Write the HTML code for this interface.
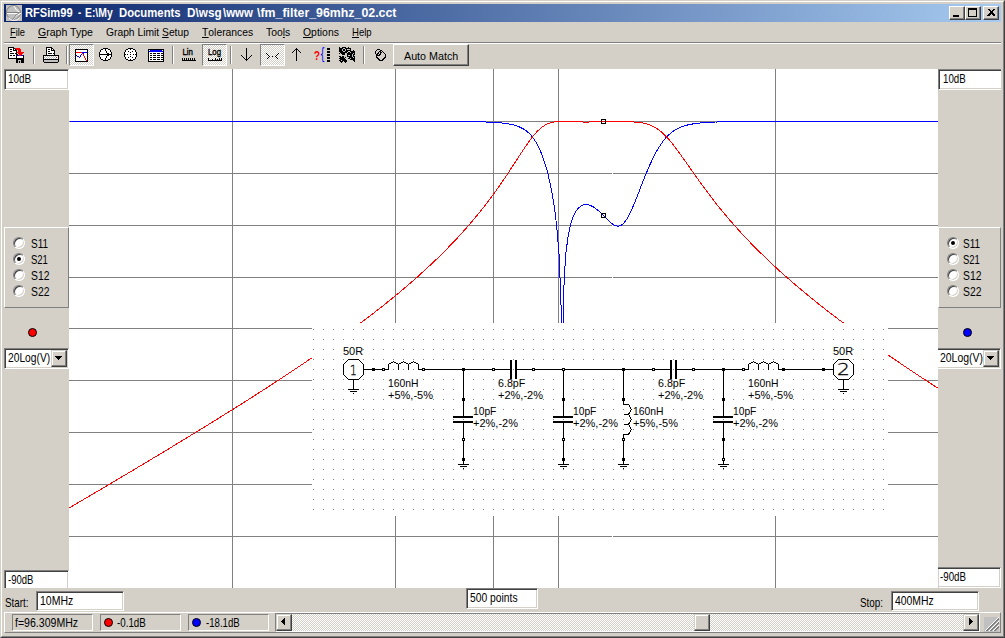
<!DOCTYPE html>
<html><head><meta charset="utf-8"><title>RFSim99</title>
<style>
*{margin:0;padding:0;box-sizing:border-box}
html,body{width:1005px;height:638px;overflow:hidden;background:#d4d0c8}
body{position:relative;font-family:"Liberation Sans",sans-serif;font-size:11px;color:#000;-webkit-font-smoothing:none}
.a{position:absolute}
.t{position:absolute;white-space:nowrap;line-height:13px;height:13px}
.t{transform-origin:0 10px}
.sunk{position:absolute;background:#fff;border:1px solid;border-color:#808080 #fff #fff #808080;box-shadow:inset 1px 1px 0 #404040, inset -1px -1px 0 #d4d0c8}
.stat{position:absolute;border:1px solid;border-color:#808080 #fff #fff #808080}
.btn{position:absolute;background:#d4d0c8;border:1px solid;border-color:#fff #404040 #404040 #fff;box-shadow:inset -1px -1px 0 #808080, inset 1px 1px 0 #d4d0c8}
.sbtn{position:absolute;background:#d4d0c8;border:1px solid;border-color:#d4d0c8 #404040 #404040 #d4d0c8;box-shadow:inset -1px -1px 0 #808080, inset 1px 1px 0 #fff}
.chk{background-color:#fff;background-image:linear-gradient(45deg,#d4d0c8 25%,transparent 25%,transparent 75%,#d4d0c8 75%),linear-gradient(45deg,#d4d0c8 25%,transparent 25%,transparent 75%,#d4d0c8 75%);background-size:2px 2px;background-position:0 0,1px 1px}
.tbp{position:absolute;border:1px solid;border-color:#808080 #fff #fff #808080}
.sep{position:absolute;width:2px;height:18px;top:46px;border-left:1px solid #808080;border-right:1px solid #fff}
u{text-decoration:none;border-bottom:1px solid #000;display:inline-block;line-height:11px;height:11px;vertical-align:top;margin-top:1px}
.radio{position:absolute;width:12px;height:12px;border-radius:50%;background:#fff;border:1px solid;border-color:#808080 #fff #fff #808080;box-shadow:inset 1px 1px 0 #404040, inset -1px -1px 0 #d4d0c8}
svg{position:absolute;left:0;top:0}
svg.a{left:auto;top:auto}
</style></head><body>

<div class="a" style="left:0;top:0;width:1005px;height:638px;border:1px solid;border-color:#d4d0c8 #404040 #404040 #d4d0c8"></div>
<div class="a" style="left:1px;top:1px;width:1003px;height:636px;border:1px solid;border-color:#fff #808080 #808080 #fff"></div>
<div class="a" style="left:4px;top:4px;width:997px;height:18px;background:linear-gradient(90deg,#0a246a,#a6caf0)"></div>
<div class="a" id="title" style="left:0;top:0;color:#fff;font-weight:bold;font-size:12px">
<span class="t" id="t0" style="left:25.25px;top:7px;transform:scale(0.9277,1);">RFSim99 </span>
<span class="t" id="t1" style="left:77.62px;top:7px;transform:scale(0.7815,1);">- </span>
<span class="t" id="t2" style="left:85.23px;top:7px;transform:scale(0.8638,1);">E:\My </span>
<span class="t" id="t3" style="left:119.47px;top:7px;transform:scale(0.9426,1);">Documents </span>
<span class="t" id="t4" style="left:187.25px;top:7px;transform:scale(0.979,1);">D\wsg</span>
<span class="t" id="t5" style="left:223.27px;top:7px;transform:scale(0.9555,1);">\www</span>
<span class="t" id="t6" style="left:256.68px;top:7px;transform:scale(1.0299,1);">\fm_filter_96mhz_02.cct</span>
</div>
<div class="btn" style="left:949px;top:6px;width:16px;height:14px"></div>
<div class="btn" style="left:965px;top:6px;width:16px;height:14px"></div>
<div class="btn" style="left:983px;top:6px;width:16px;height:14px"></div>
<div class="t" id="m0" style="left:10.07px;top:26px;transform:scale(0.8459,1);"><u>F</u>ile</div>
<div class="t" id="m1" style="left:38.3px;top:26px;transform:scale(0.9581,1);"><u>G</u>raph Type</div>
<div class="t" id="m2" style="left:105.5px;top:26px;transform:scale(0.9348,1);">Graph Limit <u>S</u>etup</div>
<div class="t" id="m3" style="left:201.5px;top:26px;transform:scale(0.9409,1);"><u>T</u>olerances</div>
<div class="t" id="m4" style="left:265.71px;top:26px;transform:scale(0.9394,1);">Too<u>l</u>s</div>
<div class="t" id="m5" style="left:302.9px;top:26px;transform:scale(0.9474,1);"><u>O</u>ptions</div>
<div class="t" id="m6" style="left:352.1px;top:26px;transform:scale(0.8696,1);"><u>H</u>elp</div>
<div class="a" style="left:4px;top:42px;width:997px;height:1px;background:#808080"></div>
<div class="a" style="left:4px;top:43px;width:997px;height:1px;background:#fff"></div>
<div class="sep" style="left:33px"></div>
<div class="sep" style="left:66px"></div>
<div class="sep" style="left:172px"></div>
<div class="sep" style="left:230px"></div>
<div class="sep" style="left:363px"></div>
<div class="tbp chk" style="left:69px;top:44px;width:25px;height:22px"></div>
<div class="tbp chk" style="left:202px;top:44px;width:25px;height:22px"></div>
<div class="tbp chk" style="left:260px;top:44px;width:25px;height:22px"></div>
<div class="btn" style="left:393px;top:44px;width:76px;height:22px"></div>
<div class="t" id="am" style="left:404.3px;top:50px;transform:scale(0.9749,1);">Auto Match</div>
<div class="a" style="left:69px;top:69px;width:869px;height:519px;background:#fff"></div>
<div class="a" style="left:4px;top:69px;width:65px;height:519px;overflow:hidden">
<div class="sunk" style="left:0;top:0;width:65px;height:21px"></div>
<div class="sunk" style="left:0;top:501px;width:65px;height:21px"></div>
</div>
<div class="t ms" id="e1" style="left:8.11px;top:73px;transform:scale(0.905,1.14);">10dB</div>
<div class="t ms" id="e2" style="left:8.49px;top:574px;transform:scale(0.8631,1.14);">-90dB</div>
<div class="a" style="left:938px;top:69px;width:63px;height:519px;overflow:hidden">
<div class="sunk" style="left:0;top:0;width:70px;height:21px"></div>
<div class="sunk" style="left:-2px;top:498px;width:65px;height:21px"></div>
</div>
<div class="t ms" id="e3" style="left:942.89px;top:73px;transform:scale(0.8817,1.14);">10dB</div>
<div class="t ms" id="e4" style="left:940.07px;top:571px;transform:scale(0.8835,1.14);">-90dB</div>
<div class="a" style="left:4px;top:227px;width:65px;height:81px;border:1px solid;border-color:#fff #808080 #808080 #fff"></div>
<div class="radio" style="left:13px;top:237px"></div>
<div class="t ms" id="ra0" style="left:31.11px;top:238px;transform:scale(0.9077,1.14);">S11</div>
<div class="radio" style="left:13px;top:253px"></div>
<div class="a" style="left:17px;top:257px;width:4px;height:4px;background:#000;border-radius:50%"></div>
<div class="t ms" id="ra1" style="left:31.13px;top:254px;transform:scale(0.8623,1.14);">S21</div>
<div class="radio" style="left:13px;top:269px"></div>
<div class="t ms" id="ra2" style="left:31.08px;top:270px;transform:scale(0.9415,1.14);">S12</div>
<div class="radio" style="left:13px;top:285px"></div>
<div class="t ms" id="ra3" style="left:31.08px;top:286px;transform:scale(0.9415,1.14);">S22</div>
<div class="a" style="left:938px;top:227px;width:63px;height:81px;border:1px solid;border-color:#fff #808080 #808080 #fff"></div>
<div class="radio" style="left:947px;top:237px"></div>
<div class="a" style="left:951px;top:241px;width:4px;height:4px;background:#000;border-radius:50%"></div>
<div class="t ms" id="rb0" style="left:962.69px;top:238px;transform:scale(0.9077,1.14);">S11</div>
<div class="radio" style="left:947px;top:253px"></div>
<div class="t ms" id="rb1" style="left:962.69px;top:254px;transform:scale(0.8623,1.14);">S21</div>
<div class="radio" style="left:947px;top:269px"></div>
<div class="t ms" id="rb2" style="left:962.71px;top:270px;transform:scale(0.9415,1.14);">S12</div>
<div class="radio" style="left:947px;top:285px"></div>
<div class="t ms" id="rb3" style="left:962.71px;top:286px;transform:scale(0.9415,1.14);">S22</div>
<div class="a" style="left:28px;top:328px;width:9px;height:9px;border-radius:50%;background:#f00;border:1px solid #000"></div>
<div class="a" style="left:963px;top:328px;width:9px;height:9px;border-radius:50%;background:#00f;border:1px solid #000"></div>
<div class="a" style="left:4px;top:348px;width:65px;height:21px;overflow:hidden"><div class="sunk" style="left:0px;top:0;width:65px;height:21px"></div></div>
<div class="t ms" id="c1" style="left:7.52px;top:352px;transform:scale(0.9318,1.14);">20Log(V)</div>
<div class="sbtn" style="left:51px;top:350px;width:16px;height:17px"></div>
<svg class="a" style="left:55px;top:356px" width="7" height="4" shape-rendering="crispEdges"><path d="M0 0h7v1h-1v1h-1v1h-1v1h-1v-1h-1v-1h-1v-1h-1z" fill="#000"/></svg>
<div class="a" style="left:938px;top:348px;width:63px;height:21px;overflow:hidden"><div class="sunk" style="left:-2px;top:0;width:65px;height:21px"></div></div>
<div class="t ms" id="c2" style="left:939.51px;top:352px;transform:scale(0.9498,1.14);">20Log(V)</div>
<div class="sbtn" style="left:983px;top:350px;width:16px;height:17px"></div>
<svg class="a" style="left:987px;top:356px" width="7" height="4" shape-rendering="crispEdges"><path d="M0 0h7v1h-1v1h-1v1h-1v1h-1v-1h-1v-1h-1v-1h-1z" fill="#000"/></svg>
<div class="t ms" id="st" style="left:5.09px;top:597px;transform:scale(0.893,1.14);">Start:</div>
<div class="sunk" style="left:36px;top:591px;width:88px;height:20px"></div>
<div class="t ms" id="e5" style="left:40.31px;top:595px;transform:scale(0.9549,1.14);">10MHz</div>
<div class="sunk" style="left:466px;top:588px;width:72px;height:21px"></div>
<div class="t ms" id="e6" style="left:469.7px;top:592px;transform:scale(0.9375,1.14);">500 points</div>
<div class="t ms" id="sp" style="left:860.1px;top:597px;transform:scale(0.8963,1.14);">Stop:</div>
<div class="sunk" style="left:891px;top:591px;width:88px;height:20px"></div>
<div class="t ms" id="e7" style="left:894.7px;top:595px;transform:scale(0.9465,1.14);">400MHz</div>
<div class="a" style="left:4px;top:612px;width:997px;height:21px;border:1px solid;border-color:#fff #808080 #808080 #fff"></div>
<div class="stat" style="left:12px;top:614px;width:81px;height:17px"></div>
<div class="t ms" id="s1" style="left:14.7px;top:617px;transform:scale(0.9607,1.14);">f=96.309MHz</div>
<div class="stat" style="left:100px;top:614px;width:81px;height:17px"></div>
<div class="a" style="left:104px;top:618px;width:9px;height:9px;border-radius:50%;background:#f00;border:1px solid #000"></div>
<div class="t ms" id="s2" style="left:116.9px;top:617px;transform:scale(0.8876,1.14);">-0.1dB</div>
<div class="stat" style="left:188px;top:614px;width:81px;height:17px"></div>
<div class="a" style="left:192px;top:618px;width:9px;height:9px;border-radius:50%;background:#00f;border:1px solid #000"></div>
<div class="t ms" id="s3" style="left:205.89px;top:617px;transform:scale(0.874,1.14);">-18.1dB</div>
<div class="stat chk" style="left:275px;top:613px;width:705px;height:19px"></div>
<div class="sbtn" style="left:276px;top:614px;width:16px;height:17px"></div>
<svg class="a" style="left:281px;top:618px" width="4" height="7" shape-rendering="crispEdges"><path d="M4 0v7h-1v-1h-1v-1h-1v-1h-1v-1h1v-1h1v-1h1v-1z" fill="#000"/></svg>
<div class="sbtn" style="left:963px;top:614px;width:16px;height:17px"></div>
<svg class="a" style="left:969px;top:618px" width="4" height="7" shape-rendering="crispEdges"><path d="M0 0v7h1v-1h1v-1h1v-1h1v-1h-1v-1h-1v-1h-1v-1z" fill="#000"/></svg>
<div class="sbtn" style="left:694px;top:614px;width:16px;height:17px"></div>
<div class="a" style="left:984px;top:617px;width:15px;height:15px;background:#c0c0c0"></div>
<svg width="1005" height="638" viewBox="0 0 1005 638" shape-rendering="crispEdges" style="pointer-events:none"><g fill="none"><path d="M984.5 631.5L998.5 617.5" stroke="#fff"/><path d="M985.5 631.5L998.5 618.5M986.5 631.5L998.5 619.5" stroke="#808080"/><path d="M988.5 631.5L998.5 621.5" stroke="#fff"/><path d="M989.5 631.5L998.5 622.5M990.5 631.5L998.5 623.5" stroke="#808080"/><path d="M992.5 631.5L998.5 625.5" stroke="#fff"/><path d="M993.5 631.5L998.5 626.5M994.5 631.5L998.5 627.5" stroke="#808080"/></g><rect x="938" y="569" width="1" height="19" fill="#d4d0c8"/></svg>
<svg width="1005" height="638" viewBox="0 0 1005 638" shape-rendering="crispEdges">
<defs><clipPath id="cp"><rect x="69" y="69" width="869" height="519"/></clipPath>
<pattern id="dots" x="313" y="329" width="10" height="10" patternUnits="userSpaceOnUse"><rect x="0" y="0" width="1" height="1" fill="#808080"/></pattern></defs>
<g clip-path="url(#cp)">
<rect x="232" y="69" width="1" height="519" fill="#808080"/>
<rect x="395" y="69" width="1" height="519" fill="#808080"/>
<rect x="493" y="69" width="1" height="519" fill="#808080"/>
<rect x="558" y="69" width="1" height="519" fill="#808080"/>
<rect x="775" y="69" width="1" height="519" fill="#808080"/>
<rect x="69" y="121" width="869" height="1" fill="#808080"/>
<rect x="612" y="121" width="1" height="1" fill="#fff"/>
<rect x="69" y="173" width="869" height="1" fill="#808080"/>
<rect x="612" y="173" width="1" height="1" fill="#fff"/>
<rect x="69" y="225" width="869" height="1" fill="#808080"/>
<rect x="612" y="225" width="1" height="1" fill="#fff"/>
<rect x="69" y="277" width="869" height="1" fill="#808080"/>
<rect x="612" y="277" width="1" height="1" fill="#fff"/>
<rect x="69" y="328" width="869" height="1" fill="#808080"/>
<rect x="612" y="328" width="1" height="1" fill="#fff"/>
<rect x="69" y="380" width="869" height="1" fill="#808080"/>
<rect x="612" y="380" width="1" height="1" fill="#fff"/>
<rect x="69" y="432" width="869" height="1" fill="#808080"/>
<rect x="612" y="432" width="1" height="1" fill="#fff"/>
<rect x="69" y="484" width="869" height="1" fill="#808080"/>
<rect x="612" y="484" width="1" height="1" fill="#fff"/>
<rect x="69" y="536" width="869" height="1" fill="#808080"/>
<rect x="612" y="536" width="1" height="1" fill="#fff"/>
<polyline points="69.6,121.4 71.3,121.4 73.1,121.4 74.8,121.4 76.6,121.4 78.3,121.4 80.0,121.4 81.8,121.4 83.5,121.4 85.3,121.4 87.0,121.4 88.8,121.4 90.5,121.4 92.2,121.4 94.0,121.4 95.7,121.4 97.5,121.4 99.2,121.4 100.9,121.4 102.7,121.4 104.4,121.4 106.2,121.4 107.9,121.4 109.7,121.4 111.4,121.4 113.1,121.4 114.9,121.4 116.6,121.4 118.4,121.4 120.1,121.4 121.8,121.4 123.6,121.4 125.3,121.4 127.1,121.4 128.8,121.4 130.6,121.4 132.3,121.4 134.0,121.4 135.8,121.4 137.5,121.4 139.3,121.4 141.0,121.4 142.7,121.4 144.5,121.4 146.2,121.4 148.0,121.4 149.7,121.4 151.4,121.4 153.2,121.4 154.9,121.4 156.7,121.4 158.4,121.4 160.2,121.4 161.9,121.4 163.6,121.4 165.4,121.4 167.1,121.4 168.9,121.4 170.6,121.4 172.3,121.4 174.1,121.4 175.8,121.4 177.6,121.4 179.3,121.4 181.1,121.4 182.8,121.4 184.5,121.4 186.3,121.4 188.0,121.4 189.8,121.4 191.5,121.4 193.2,121.4 195.0,121.4 196.7,121.4 198.5,121.4 200.2,121.4 202.0,121.4 203.7,121.4 205.4,121.4 207.2,121.4 208.9,121.4 210.7,121.4 212.4,121.4 214.1,121.4 215.9,121.4 217.6,121.4 219.4,121.4 221.1,121.4 222.9,121.4 224.6,121.4 226.3,121.4 228.1,121.4 229.8,121.4 231.6,121.4 233.3,121.4 235.0,121.4 236.8,121.4 238.5,121.4 240.3,121.4 242.0,121.4 243.7,121.4 245.5,121.4 247.2,121.4 249.0,121.4 250.7,121.4 252.5,121.4 254.2,121.4 255.9,121.4 257.7,121.4 259.4,121.4 261.2,121.4 262.9,121.4 264.6,121.4 266.4,121.4 268.1,121.4 269.9,121.4 271.6,121.4 273.4,121.4 275.1,121.4 276.8,121.4 278.6,121.4 280.3,121.4 282.1,121.4 283.8,121.4 285.5,121.4 287.3,121.4 289.0,121.4 290.8,121.4 292.5,121.4 294.3,121.4 296.0,121.4 297.7,121.4 299.5,121.4 301.2,121.4 303.0,121.4 304.7,121.4 306.4,121.4 308.2,121.4 309.9,121.4 311.7,121.4 313.4,121.4 315.1,121.4 316.9,121.4 318.6,121.4 320.4,121.4 322.1,121.4 323.9,121.4 325.6,121.4 327.3,121.4 329.1,121.4 330.8,121.4 332.6,121.4 334.3,121.4 336.0,121.4 337.8,121.4 339.5,121.4 341.3,121.4 343.0,121.4 344.8,121.4 346.5,121.4 348.2,121.4 350.0,121.4 351.7,121.4 353.5,121.4 355.2,121.4 356.9,121.4 358.7,121.4 360.4,121.4 362.2,121.4 363.9,121.4 365.7,121.4 367.4,121.4 369.1,121.4 370.9,121.4 372.6,121.4 374.4,121.4 376.1,121.4 377.8,121.4 379.6,121.4 381.3,121.4 383.1,121.4 384.8,121.4 386.5,121.4 388.3,121.4 390.0,121.4 391.8,121.4 393.5,121.4 395.3,121.4 397.0,121.4 398.7,121.4 400.5,121.4 402.2,121.4 404.0,121.4 405.7,121.4 407.4,121.4 409.2,121.4 410.9,121.4 412.7,121.4 414.4,121.4 416.2,121.4 417.9,121.4 419.6,121.4 421.4,121.4 423.1,121.4 424.9,121.4 426.6,121.4 428.3,121.4 430.1,121.4 431.8,121.4 433.6,121.4 435.3,121.4 437.1,121.5 438.8,121.5 440.5,121.5 442.3,121.5 444.0,121.5 445.8,121.5 447.5,121.5 449.2,121.5 451.0,121.5 452.7,121.5 454.5,121.5 456.2,121.5 458.0,121.5 459.7,121.5 461.4,121.6 463.2,121.6 464.9,121.6 466.7,121.6 468.4,121.6 470.1,121.6 471.9,121.7 473.6,121.7 475.4,121.7 477.1,121.8 478.8,121.8 480.6,121.8 482.3,121.9 484.1,121.9 485.8,122.0 487.6,122.0 489.3,122.1 491.0,122.2 492.8,122.3 494.5,122.4 496.3,122.5 498.0,122.6 499.7,122.8 501.5,122.9 503.2,123.1 505.0,123.3 506.7,123.6 508.5,123.9 510.2,124.2 511.9,124.6 513.7,125.0 515.4,125.5 517.2,126.1 518.9,126.7 520.6,127.5 522.4,128.4 524.1,129.4 525.9,130.6 527.6,132.0 529.4,133.6 531.1,135.4 532.8,137.6 534.6,140.0 536.3,142.8 538.1,146.0 539.8,149.6 541.5,153.7 543.3,158.4 545.0,163.6 546.8,169.6 548.5,176.3 550.2,184.0 552.0,192.8 553.7,203.1 555.5,215.7 557.2,231.6 559.0,253.9 560.7,293.6 562.4,351.2 564.2,277.6 565.9,253.2 567.7,239.1 569.4,229.6 571.1,222.7 572.9,217.6 574.6,213.7 576.4,210.7 578.1,208.5 579.9,206.9 581.6,205.7 583.3,205.0 585.1,204.7 586.8,204.6 588.6,204.9 590.3,205.4 592.0,206.2 593.8,207.2 595.5,208.4 597.3,209.7 599.0,211.2 600.8,212.8 602.5,214.5 604.2,216.3 606.0,218.1 607.7,219.8 609.5,221.5 611.2,223.0 612.9,224.3 614.7,225.3 616.4,225.9 618.2,226.1 619.9,225.8 621.7,224.9 623.4,223.5 625.1,221.5 626.9,218.9 628.6,215.9 630.4,212.4 632.1,208.6 633.8,204.6 635.6,200.3 637.3,195.9 639.1,191.4 640.8,186.9 642.5,182.4 644.3,178.0 646.0,173.8 647.8,169.6 649.5,165.6 651.3,161.8 653.0,158.1 654.7,154.7 656.5,151.5 658.2,148.5 660.0,145.7 661.7,143.1 663.4,140.8 665.2,138.6 666.9,136.7 668.7,135.0 670.4,133.4 672.2,132.0 673.9,130.8 675.6,129.7 677.4,128.7 679.1,127.9 680.9,127.1 682.6,126.5 684.3,125.9 686.1,125.4 687.8,124.9 689.6,124.5 691.3,124.2 693.1,123.9 694.8,123.6 696.5,123.4 698.3,123.2 700.0,123.0 701.8,122.8 703.5,122.7 705.2,122.5 707.0,122.4 708.7,122.3 710.5,122.2 712.2,122.1 713.9,122.1 715.7,122.0 717.4,122.0 719.2,121.9 720.9,121.9 722.7,121.8 724.4,121.8 726.1,121.7 727.9,121.7 729.6,121.7 731.4,121.7 733.1,121.6 734.8,121.6 736.6,121.6 738.3,121.6 740.1,121.6 741.8,121.6 743.6,121.5 745.3,121.5 747.0,121.5 748.8,121.5 750.5,121.5 752.3,121.5 754.0,121.5 755.7,121.5 757.5,121.5 759.2,121.5 761.0,121.5 762.7,121.5 764.5,121.5 766.2,121.5 767.9,121.4 769.7,121.4 771.4,121.4 773.2,121.4 774.9,121.4 776.6,121.4 778.4,121.4 780.1,121.4 781.9,121.4 783.6,121.4 785.3,121.4 787.1,121.4 788.8,121.4 790.6,121.4 792.3,121.4 794.1,121.4 795.8,121.4 797.5,121.4 799.3,121.4 801.0,121.4 802.8,121.4 804.5,121.4 806.2,121.4 808.0,121.4 809.7,121.4 811.5,121.4 813.2,121.4 815.0,121.4 816.7,121.4 818.4,121.4 820.2,121.4 821.9,121.4 823.7,121.4 825.4,121.4 827.1,121.4 828.9,121.4 830.6,121.4 832.4,121.4 834.1,121.4 835.9,121.4 837.6,121.4 839.3,121.4 841.1,121.4 842.8,121.4 844.6,121.4 846.3,121.4 848.0,121.4 849.8,121.4 851.5,121.4 853.3,121.4 855.0,121.4 856.8,121.4 858.5,121.4 860.2,121.4 862.0,121.4 863.7,121.4 865.5,121.4 867.2,121.4 868.9,121.4 870.7,121.4 872.4,121.4 874.2,121.4 875.9,121.4 877.6,121.4 879.4,121.4 881.1,121.4 882.9,121.4 884.6,121.4 886.4,121.4 888.1,121.4 889.8,121.4 891.6,121.4 893.3,121.4 895.1,121.4 896.8,121.4 898.5,121.4 900.3,121.4 902.0,121.4 903.8,121.4 905.5,121.4 907.3,121.4 909.0,121.4 910.7,121.4 912.5,121.4 914.2,121.4 916.0,121.4 917.7,121.4 919.4,121.4 921.2,121.4 922.9,121.4 924.7,121.4 926.4,121.4 928.2,121.4 929.9,121.4 931.6,121.4 933.4,121.4 935.1,121.4 936.9,121.4 938.6,121.4" fill="none" stroke="#0000ff" stroke-width="1"/>
<polyline points="69.6,507.7 71.3,506.7 73.1,505.7 74.8,504.6 76.6,503.6 78.3,502.6 80.0,501.6 81.8,500.6 83.5,499.5 85.3,498.5 87.0,497.5 88.8,496.5 90.5,495.4 92.2,494.4 94.0,493.4 95.7,492.3 97.5,491.3 99.2,490.3 100.9,489.3 102.7,488.2 104.4,487.2 106.2,486.2 107.9,485.1 109.7,484.1 111.4,483.1 113.1,482.0 114.9,481.0 116.6,480.0 118.4,478.9 120.1,477.9 121.8,476.9 123.6,475.8 125.3,474.8 127.1,473.8 128.8,472.7 130.6,471.7 132.3,470.7 134.0,469.6 135.8,468.6 137.5,467.5 139.3,466.5 141.0,465.5 142.7,464.4 144.5,463.4 146.2,462.3 148.0,461.3 149.7,460.2 151.4,459.2 153.2,458.1 154.9,457.1 156.7,456.1 158.4,455.0 160.2,454.0 161.9,452.9 163.6,451.9 165.4,450.8 167.1,449.8 168.9,448.7 170.6,447.7 172.3,446.6 174.1,445.5 175.8,444.5 177.6,443.4 179.3,442.4 181.1,441.3 182.8,440.3 184.5,439.2 186.3,438.1 188.0,437.1 189.8,436.0 191.5,434.9 193.2,433.9 195.0,432.8 196.7,431.7 198.5,430.7 200.2,429.6 202.0,428.5 203.7,427.5 205.4,426.4 207.2,425.3 208.9,424.2 210.7,423.2 212.4,422.1 214.1,421.0 215.9,419.9 217.6,418.9 219.4,417.8 221.1,416.7 222.9,415.6 224.6,414.5 226.3,413.4 228.1,412.3 229.8,411.3 231.6,410.2 233.3,409.1 235.0,408.0 236.8,406.9 238.5,405.8 240.3,404.7 242.0,403.6 243.7,402.5 245.5,401.4 247.2,400.3 249.0,399.2 250.7,398.1 252.5,397.0 254.2,395.8 255.9,394.7 257.7,393.6 259.4,392.5 261.2,391.4 262.9,390.3 264.6,389.1 266.4,388.0 268.1,386.9 269.9,385.7 271.6,384.6 273.4,383.5 275.1,382.4 276.8,381.2 278.6,380.1 280.3,378.9 282.1,377.8 283.8,376.6 285.5,375.5 287.3,374.3 289.0,373.2 290.8,372.0 292.5,370.9 294.3,369.7 296.0,368.5 297.7,367.4 299.5,366.2 301.2,365.0 303.0,363.9 304.7,362.7 306.4,361.5 308.2,360.3 309.9,359.1 311.7,358.0 313.4,356.8 315.1,355.6 316.9,354.4 318.6,353.2 320.4,352.0 322.1,350.7 323.9,349.5 325.6,348.3 327.3,347.1 329.1,345.9 330.8,344.7 332.6,343.4 334.3,342.2 336.0,340.9 337.8,339.7 339.5,338.5 341.3,337.2 343.0,336.0 344.8,334.7 346.5,333.4 348.2,332.2 350.0,330.9 351.7,329.6 353.5,328.3 355.2,327.0 356.9,325.7 358.7,324.5 360.4,323.1 362.2,321.8 363.9,320.5 365.7,319.2 367.4,317.9 369.1,316.6 370.9,315.2 372.6,313.9 374.4,312.5 376.1,311.2 377.8,309.8 379.6,308.5 381.3,307.1 383.1,305.7 384.8,304.3 386.5,302.9 388.3,301.5 390.0,300.1 391.8,298.7 393.5,297.3 395.3,295.8 397.0,294.4 398.7,293.0 400.5,291.5 402.2,290.0 404.0,288.6 405.7,287.1 407.4,285.6 409.2,284.1 410.9,282.6 412.7,281.1 414.4,279.5 416.2,278.0 417.9,276.5 419.6,274.9 421.4,273.3 423.1,271.7 424.9,270.2 426.6,268.6 428.3,266.9 430.1,265.3 431.8,263.7 433.6,262.0 435.3,260.3 437.1,258.7 438.8,257.0 440.5,255.3 442.3,253.5 444.0,251.8 445.8,250.0 447.5,248.3 449.2,246.5 451.0,244.7 452.7,242.9 454.5,241.0 456.2,239.2 458.0,237.3 459.7,235.4 461.4,233.5 463.2,231.6 464.9,229.6 466.7,227.6 468.4,225.7 470.1,223.6 471.9,221.6 473.6,219.5 475.4,217.4 477.1,215.3 478.8,213.2 480.6,211.0 482.3,208.8 484.1,206.6 485.8,204.4 487.6,202.1 489.3,199.8 491.0,197.5 492.8,195.1 494.5,192.7 496.3,190.3 498.0,187.9 499.7,185.4 501.5,182.9 503.2,180.3 505.0,177.8 506.7,175.2 508.5,172.6 510.2,169.9 511.9,167.3 513.7,164.6 515.4,161.9 517.2,159.2 518.9,156.5 520.6,153.9 522.4,151.2 524.1,148.6 525.9,146.0 527.6,143.5 529.4,141.1 531.1,138.7 532.8,136.5 534.6,134.4 536.3,132.4 538.1,130.6 539.8,129.0 541.5,127.5 543.3,126.3 545.0,125.2 546.8,124.2 548.5,123.5 550.2,122.9 552.0,122.4 553.7,122.0 555.5,121.7 557.2,121.6 559.0,121.5 560.7,121.4 562.4,121.4 564.2,121.4 565.9,121.5 567.7,121.5 569.4,121.6 571.1,121.7 572.9,121.7 574.6,121.8 576.4,121.8 578.1,121.9 579.9,121.9 581.6,121.9 583.3,122.0 585.1,122.0 586.8,122.0 588.6,122.0 590.3,121.9 592.0,121.9 593.8,121.9 595.5,121.9 597.3,121.9 599.0,121.8 600.8,121.8 602.5,121.8 604.2,121.7 606.0,121.7 607.7,121.7 609.5,121.7 611.2,121.6 612.9,121.6 614.7,121.6 616.4,121.6 618.2,121.6 619.9,121.6 621.7,121.6 623.4,121.6 625.1,121.7 626.9,121.7 628.6,121.7 630.4,121.8 632.1,121.9 633.8,122.0 635.6,122.1 637.3,122.2 639.1,122.4 640.8,122.7 642.5,123.0 644.3,123.3 646.0,123.7 647.8,124.2 649.5,124.8 651.3,125.5 653.0,126.3 654.7,127.2 656.5,128.3 658.2,129.5 660.0,130.8 661.7,132.2 663.4,133.8 665.2,135.5 666.9,137.3 668.7,139.3 670.4,141.3 672.2,143.4 673.9,145.6 675.6,147.9 677.4,150.3 679.1,152.6 680.9,155.1 682.6,157.5 684.3,160.0 686.1,162.4 687.8,164.9 689.6,167.4 691.3,169.9 693.1,172.4 694.8,174.9 696.5,177.3 698.3,179.7 700.0,182.2 701.8,184.6 703.5,186.9 705.2,189.3 707.0,191.6 708.7,193.9 710.5,196.2 712.2,198.5 713.9,200.7 715.7,203.0 717.4,205.2 719.2,207.3 720.9,209.5 722.7,211.6 724.4,213.7 726.1,215.8 727.9,217.8 729.6,219.9 731.4,221.9 733.1,223.9 734.8,225.9 736.6,227.8 738.3,229.7 740.1,231.7 741.8,233.6 743.6,235.4 745.3,237.3 747.0,239.1 748.8,241.0 750.5,242.8 752.3,244.6 754.0,246.4 755.7,248.1 757.5,249.9 759.2,251.6 761.0,253.3 762.7,255.0 764.5,256.7 766.2,258.4 767.9,260.1 769.7,261.7 771.4,263.4 773.2,265.0 774.9,266.6 776.6,268.2 778.4,269.8 780.1,271.4 781.9,273.0 783.6,274.5 785.3,276.1 787.1,277.6 788.8,279.1 790.6,280.7 792.3,282.2 794.1,283.7 795.8,285.2 797.5,286.7 799.3,288.1 801.0,289.6 802.8,291.1 804.5,292.5 806.2,293.9 808.0,295.4 809.7,296.8 811.5,298.2 813.2,299.6 815.0,301.0 816.7,302.4 818.4,303.8 820.2,305.2 821.9,306.6 823.7,308.0 825.4,309.3 827.1,310.7 828.9,312.0 830.6,313.4 832.4,314.7 834.1,316.0 835.9,317.4 837.6,318.7 839.3,320.0 841.1,321.3 842.8,322.6 844.6,323.9 846.3,325.2 848.0,326.5 849.8,327.8 851.5,329.1 853.3,330.3 855.0,331.6 856.8,332.9 858.5,334.1 860.2,335.4 862.0,336.7 863.7,337.9 865.5,339.2 867.2,340.4 868.9,341.6 870.7,342.9 872.4,344.1 874.2,345.3 875.9,346.5 877.6,347.8 879.4,349.0 881.1,350.2 882.9,351.4 884.6,352.6 886.4,353.8 888.1,355.0 889.8,356.2 891.6,357.4 893.3,358.6 895.1,359.8 896.8,360.9 898.5,362.1 900.3,363.3 902.0,364.5 903.8,365.7 905.5,366.8 907.3,368.0 909.0,369.1 910.7,370.3 912.5,371.5 914.2,372.6 916.0,373.8 917.7,374.9 919.4,376.1 921.2,377.2 922.9,378.4 924.7,379.5 926.4,380.6 928.2,381.8 929.9,382.9 931.6,384.1 933.4,385.2 935.1,386.3 936.9,387.4 938.6,388.6" fill="none" stroke="#ff0000" stroke-width="1"/>
<rect x="601.5" y="119.5" width="4" height="4" fill="none" stroke="#000" stroke-width="1"/>
<rect x="601.5" y="213.5" width="4" height="4" fill="none" stroke="#000" stroke-width="1"/>
</g>
<rect x="312" y="323" width="576" height="193" fill="#fff"/>
<rect x="313" y="329" width="571" height="181" fill="url(#dots)"/>
<rect x="343" y="345" width="20" height="12" fill="#fff"/><rect x="833" y="345" width="20" height="12" fill="#fff"/><rect x="388" y="377" width="32" height="12" fill="#fff"/><rect x="388" y="389" width="45" height="12" fill="#fff"/><rect x="748" y="377" width="32" height="12" fill="#fff"/><rect x="748" y="389" width="45" height="12" fill="#fff"/><rect x="498" y="377" width="28" height="12" fill="#fff"/><rect x="498" y="389" width="45" height="12" fill="#fff"/><rect x="658" y="377" width="28" height="12" fill="#fff"/><rect x="658" y="389" width="45" height="12" fill="#fff"/><rect x="473" y="405" width="25" height="12" fill="#fff"/><rect x="473" y="417" width="45" height="12" fill="#fff"/><rect x="573" y="405" width="25" height="12" fill="#fff"/><rect x="573" y="417" width="45" height="12" fill="#fff"/><rect x="733" y="405" width="25" height="12" fill="#fff"/><rect x="733" y="417" width="45" height="12" fill="#fff"/><rect x="633" y="405" width="32" height="12" fill="#fff"/><rect x="633" y="417" width="45" height="12" fill="#fff"/>
<g id="sch" fill="none" stroke="#000" stroke-width="1">
<rect x="363" y="369" width="471" height="1" fill="#000" stroke="none"/>
<rect x="512" y="369" width="3" height="1" fill="#fff" stroke="none"/>
<rect x="513" y="369" width="1" height="1" fill="#808080" stroke="none"/>
<rect x="672" y="369" width="3" height="1" fill="#fff" stroke="none"/>
<rect x="673" y="369" width="1" height="1" fill="#808080" stroke="none"/>
<polygon points="348.5,359.5 358.5,359.5 363.5,364.5 363.5,374.5 358.5,379.5 348.5,379.5 343.5,374.5 343.5,364.5" fill="#fff" stroke="#000"/>
<rect x="353" y="379" width="1" height="11" fill="#000" stroke="none"/>
<rect x="348" y="389" width="11" height="1" fill="#000" stroke="none"/>
<rect x="350" y="391" width="7" height="1" fill="#000" stroke="none"/>
<rect x="353" y="393" width="1" height="1" fill="#000" stroke="none"/>
<polygon points="838.5,359.5 848.5,359.5 853.5,364.5 853.5,374.5 848.5,379.5 838.5,379.5 833.5,374.5 833.5,364.5" fill="#fff" stroke="#000"/>
<rect x="843" y="379" width="1" height="11" fill="#000" stroke="none"/>
<rect x="838" y="389" width="11" height="1" fill="#000" stroke="none"/>
<rect x="840" y="391" width="7" height="1" fill="#000" stroke="none"/>
<rect x="843" y="393" width="1" height="1" fill="#000" stroke="none"/>
<rect x="389" y="369" width="29" height="1" fill="#fff" stroke="none"/>
<rect x="393" y="369" width="1" height="1" fill="#808080" stroke="none"/>
<rect x="403" y="369" width="1" height="1" fill="#808080" stroke="none"/>
<rect x="413" y="369" width="1" height="1" fill="#808080" stroke="none"/>
<rect x="383" y="369" width="6" height="1" fill="#000" stroke="none"/>
<polyline points="388.5,369.5 388.5,364.5 388.5,364.5 393.5,361.5 398.5,364.5 398.5,369.5 398.5,364.5 398.5,364.5 403.5,361.5 408.5,364.5 408.5,369.5 408.5,364.5 408.5,364.5 413.5,361.5 418.5,364.5 418.5,369.5 418.5,364.5 418.5,369.5" shape-rendering="crispEdges"/>
<rect x="418" y="369" width="6" height="1" fill="#000" stroke="none"/>
<rect x="749" y="369" width="29" height="1" fill="#fff" stroke="none"/>
<rect x="753" y="369" width="1" height="1" fill="#808080" stroke="none"/>
<rect x="763" y="369" width="1" height="1" fill="#808080" stroke="none"/>
<rect x="773" y="369" width="1" height="1" fill="#808080" stroke="none"/>
<rect x="743" y="369" width="6" height="1" fill="#000" stroke="none"/>
<polyline points="748.5,369.5 748.5,364.5 748.5,364.5 753.5,361.5 758.5,364.5 758.5,369.5 758.5,364.5 758.5,364.5 763.5,361.5 768.5,364.5 768.5,369.5 768.5,364.5 768.5,364.5 773.5,361.5 778.5,364.5 778.5,369.5 778.5,364.5 778.5,369.5" shape-rendering="crispEdges"/>
<rect x="778" y="369" width="6" height="1" fill="#000" stroke="none"/>
<rect x="493" y="369" width="18" height="1" fill="#000" stroke="none"/>
<rect x="516" y="369" width="18" height="1" fill="#000" stroke="none"/>
<rect x="510" y="360" width="2" height="19" fill="#000" stroke="none"/>
<rect x="515" y="360" width="2" height="19" fill="#000" stroke="none"/>
<rect x="653" y="369" width="18" height="1" fill="#000" stroke="none"/>
<rect x="676" y="369" width="18" height="1" fill="#000" stroke="none"/>
<rect x="670" y="360" width="2" height="19" fill="#000" stroke="none"/>
<rect x="675" y="360" width="2" height="19" fill="#000" stroke="none"/>
<rect x="463" y="369" width="1" height="96" fill="#000" stroke="none"/>
<rect x="563" y="369" width="1" height="96" fill="#000" stroke="none"/>
<rect x="623" y="369" width="1" height="96" fill="#000" stroke="none"/>
<rect x="723" y="369" width="1" height="96" fill="#000" stroke="none"/>
<rect x="463" y="418" width="1" height="3" fill="#fff" stroke="none"/>
<rect x="463" y="419" width="1" height="1" fill="#808080" stroke="none"/>
<rect x="463" y="399" width="1" height="18" fill="#000" stroke="none"/>
<rect x="463" y="422" width="1" height="18" fill="#000" stroke="none"/>
<rect x="453" y="416" width="20" height="2" fill="#000" stroke="none"/>
<rect x="453" y="421" width="2" height="2" fill="#000" stroke="none"/>
<rect x="453" y="421" width="20" height="2" fill="#000" stroke="none"/>
<rect x="563" y="418" width="1" height="3" fill="#fff" stroke="none"/>
<rect x="563" y="419" width="1" height="1" fill="#808080" stroke="none"/>
<rect x="563" y="399" width="1" height="18" fill="#000" stroke="none"/>
<rect x="563" y="422" width="1" height="18" fill="#000" stroke="none"/>
<rect x="553" y="416" width="20" height="2" fill="#000" stroke="none"/>
<rect x="553" y="421" width="2" height="2" fill="#000" stroke="none"/>
<rect x="553" y="421" width="20" height="2" fill="#000" stroke="none"/>
<rect x="723" y="418" width="1" height="3" fill="#fff" stroke="none"/>
<rect x="723" y="419" width="1" height="1" fill="#808080" stroke="none"/>
<rect x="723" y="399" width="1" height="18" fill="#000" stroke="none"/>
<rect x="723" y="422" width="1" height="18" fill="#000" stroke="none"/>
<rect x="713" y="416" width="20" height="2" fill="#000" stroke="none"/>
<rect x="713" y="421" width="2" height="2" fill="#000" stroke="none"/>
<rect x="713" y="421" width="20" height="2" fill="#000" stroke="none"/>
<rect x="623" y="405" width="1" height="29" fill="#fff" stroke="none"/>
<rect x="623" y="409" width="1" height="1" fill="#808080" stroke="none"/>
<rect x="623" y="419" width="1" height="1" fill="#808080" stroke="none"/>
<rect x="623" y="429" width="1" height="1" fill="#808080" stroke="none"/>
<rect x="623" y="399" width="1" height="6" fill="#000" stroke="none"/>
<polyline points="623.5,404.5 628.5,404.5 628.5,404.5 631.5,409.5 628.5,414.5 623.5,414.5 628.5,414.5 628.5,414.5 631.5,419.5 628.5,424.5 623.5,424.5 628.5,424.5 628.5,424.5 631.5,429.5 628.5,434.5 623.5,434.5 628.5,434.5 623.5,434.5"/>
<rect x="623" y="434" width="1" height="6" fill="#000" stroke="none"/>
<rect x="463" y="459" width="1" height="6" fill="#000" stroke="none"/>
<rect x="458" y="464" width="11" height="1" fill="#000" stroke="none"/>
<rect x="460" y="466" width="7" height="1" fill="#000" stroke="none"/>
<rect x="463" y="468" width="1" height="1" fill="#000" stroke="none"/>
<rect x="563" y="459" width="1" height="6" fill="#000" stroke="none"/>
<rect x="558" y="464" width="11" height="1" fill="#000" stroke="none"/>
<rect x="560" y="466" width="7" height="1" fill="#000" stroke="none"/>
<rect x="563" y="468" width="1" height="1" fill="#000" stroke="none"/>
<rect x="623" y="459" width="1" height="6" fill="#000" stroke="none"/>
<rect x="618" y="464" width="11" height="1" fill="#000" stroke="none"/>
<rect x="620" y="466" width="7" height="1" fill="#000" stroke="none"/>
<rect x="623" y="468" width="1" height="1" fill="#000" stroke="none"/>
<rect x="723" y="459" width="1" height="6" fill="#000" stroke="none"/>
<rect x="718" y="464" width="11" height="1" fill="#000" stroke="none"/>
<rect x="720" y="466" width="7" height="1" fill="#000" stroke="none"/>
<rect x="723" y="468" width="1" height="1" fill="#000" stroke="none"/>
<rect x="372" y="368" width="3" height="3" fill="#000" stroke="none"/>
<rect x="382" y="368" width="3" height="3" fill="#000" stroke="none"/><rect x="383" y="369" width="1" height="1" fill="#fff" stroke="none"/>
<rect x="422" y="368" width="3" height="3" fill="#000" stroke="none"/><rect x="423" y="369" width="1" height="1" fill="#fff" stroke="none"/>
<rect x="462" y="368" width="3" height="3" fill="#000" stroke="none"/>
<rect x="492" y="368" width="3" height="3" fill="#000" stroke="none"/><rect x="493" y="369" width="1" height="1" fill="#fff" stroke="none"/>
<rect x="532" y="368" width="3" height="3" fill="#000" stroke="none"/><rect x="533" y="369" width="1" height="1" fill="#fff" stroke="none"/>
<rect x="562" y="368" width="3" height="3" fill="#000" stroke="none"/><rect x="563" y="369" width="1" height="1" fill="#fff" stroke="none"/>
<rect x="622" y="368" width="3" height="3" fill="#000" stroke="none"/>
<rect x="652" y="368" width="3" height="3" fill="#000" stroke="none"/><rect x="653" y="369" width="1" height="1" fill="#fff" stroke="none"/>
<rect x="692" y="368" width="3" height="3" fill="#000" stroke="none"/><rect x="693" y="369" width="1" height="1" fill="#fff" stroke="none"/>
<rect x="722" y="368" width="3" height="3" fill="#000" stroke="none"/>
<rect x="742" y="368" width="3" height="3" fill="#000" stroke="none"/><rect x="743" y="369" width="1" height="1" fill="#fff" stroke="none"/>
<rect x="782" y="368" width="3" height="3" fill="#000" stroke="none"/>
<rect x="822" y="368" width="3" height="3" fill="#000" stroke="none"/>
<rect x="462" y="398" width="3" height="3" fill="#000" stroke="none"/>
<rect x="562" y="398" width="3" height="3" fill="#000" stroke="none"/>
<rect x="622" y="398" width="3" height="3" fill="#000" stroke="none"/>
<rect x="722" y="398" width="3" height="3" fill="#000" stroke="none"/>
<rect x="462" y="438" width="3" height="3" fill="#000" stroke="none"/><rect x="463" y="439" width="1" height="1" fill="#fff" stroke="none"/>
<rect x="462" y="458" width="3" height="3" fill="#000" stroke="none"/>
<rect x="562" y="438" width="3" height="3" fill="#000" stroke="none"/><rect x="563" y="439" width="1" height="1" fill="#fff" stroke="none"/>
<rect x="562" y="458" width="3" height="3" fill="#000" stroke="none"/>
<rect x="622" y="438" width="3" height="3" fill="#000" stroke="none"/><rect x="623" y="439" width="1" height="1" fill="#fff" stroke="none"/>
<rect x="622" y="458" width="3" height="3" fill="#000" stroke="none"/>
<rect x="722" y="438" width="3" height="3" fill="#000" stroke="none"/>
<rect x="722" y="458" width="3" height="3" fill="#000" stroke="none"/><rect x="723" y="459" width="1" height="1" fill="#fff" stroke="none"/>
</g>
<g font-family="Liberation Sans, sans-serif" font-size="11" fill="#000" shape-rendering="auto" text-rendering="auto">
<text x="343" y="355">50R</text>
<text x="833" y="355">50R</text>
<text transform="translate(353.4 375.2) scale(0.78 1)" x="0" y="0" font-size="14.5" font-weight="200" font-family="DejaVu Sans, Liberation Sans, sans-serif" text-anchor="middle" stroke="#000" stroke-width="0.3">1</text>
<text transform="translate(843.5 375) scale(1.35 1)" x="0" y="0" font-size="15" font-weight="200" font-family="DejaVu Sans, Liberation Sans, sans-serif" text-anchor="middle" stroke="#000" stroke-width="0.3">2</text>
<text x="388" y="387" textLength="30.6" lengthAdjust="spacingAndGlyphs">160nH</text>
<text x="388" y="399">+5%,-5%</text>
<text x="748" y="387" textLength="30.6" lengthAdjust="spacingAndGlyphs">160nH</text>
<text x="748" y="399">+5%,-5%</text>
<text x="498" y="387" textLength="27.3" lengthAdjust="spacingAndGlyphs">6.8pF</text>
<text x="498" y="399">+2%,-2%</text>
<text x="658" y="387" textLength="27.3" lengthAdjust="spacingAndGlyphs">6.8pF</text>
<text x="658" y="399">+2%,-2%</text>
<text x="473" y="415" textLength="23.4" lengthAdjust="spacingAndGlyphs">10pF</text>
<text x="473" y="427">+2%,-2%</text>
<text x="573" y="415" textLength="23.4" lengthAdjust="spacingAndGlyphs">10pF</text>
<text x="573" y="427">+2%,-2%</text>
<text x="733" y="415" textLength="23.4" lengthAdjust="spacingAndGlyphs">10pF</text>
<text x="733" y="427">+2%,-2%</text>
<text x="633" y="415" textLength="30.6" lengthAdjust="spacingAndGlyphs">160nH</text>
<text x="633" y="427">+5%,-5%</text>
</g>
</svg>
<svg width="1005" height="70" viewBox="0 0 1005 70" shape-rendering="crispEdges"><rect x="8" y="47" width="6" height="1" fill="#000"/><rect x="8" y="48" width="1" height="1" fill="#000"/><rect x="9" y="48" width="4" height="1" fill="#fff"/><rect x="13" y="48" width="2" height="1" fill="#000"/><rect x="15" y="48" width="5" height="1" fill="#f00"/><rect x="8" y="49" width="1" height="1" fill="#000"/><rect x="9" y="49" width="1" height="1" fill="#fff"/><rect x="10" y="49" width="2" height="1" fill="#000"/><rect x="12" y="49" width="1" height="1" fill="#fff"/><rect x="13" y="49" width="1" height="1" fill="#000"/><rect x="14" y="49" width="1" height="1" fill="#fff"/><rect x="15" y="49" width="1" height="1" fill="#000"/><rect x="16" y="49" width="5" height="1" fill="#f00"/><rect x="8" y="50" width="1" height="1" fill="#000"/><rect x="9" y="50" width="4" height="1" fill="#fff"/><rect x="13" y="50" width="4" height="1" fill="#000"/><rect x="18" y="50" width="3" height="1" fill="#f00"/><rect x="8" y="51" width="1" height="1" fill="#000"/><rect x="9" y="51" width="1" height="1" fill="#fff"/><rect x="10" y="51" width="2" height="1" fill="#000"/><rect x="12" y="51" width="4" height="1" fill="#fff"/><rect x="16" y="51" width="1" height="1" fill="#000"/><rect x="18" y="51" width="3" height="1" fill="#f00"/><rect x="8" y="52" width="1" height="1" fill="#000"/><rect x="9" y="52" width="7" height="1" fill="#fff"/><rect x="16" y="52" width="1" height="1" fill="#000"/><rect x="17" y="52" width="7" height="1" fill="#f00"/><rect x="8" y="53" width="1" height="1" fill="#000"/><rect x="9" y="53" width="1" height="1" fill="#fff"/><rect x="10" y="53" width="4" height="1" fill="#000"/><rect x="14" y="53" width="1" height="1" fill="#fff"/><rect x="15" y="53" width="2" height="1" fill="#000"/><rect x="18" y="53" width="5" height="1" fill="#f00"/><rect x="8" y="54" width="1" height="1" fill="#000"/><rect x="9" y="54" width="7" height="1" fill="#fff"/><rect x="16" y="54" width="2" height="1" fill="#000"/><rect x="19" y="54" width="3" height="1" fill="#f00"/><rect x="8" y="55" width="1" height="1" fill="#000"/><rect x="9" y="55" width="1" height="1" fill="#fff"/><rect x="10" y="55" width="2" height="1" fill="#000"/><rect x="12" y="55" width="1" height="1" fill="#fff"/><rect x="13" y="55" width="2" height="1" fill="#000"/><rect x="15" y="55" width="1" height="1" fill="#fff"/><rect x="16" y="55" width="1" height="1" fill="#000"/><rect x="17" y="55" width="2" height="1" fill="#00f"/><rect x="19" y="55" width="2" height="1" fill="#f00"/><rect x="21" y="55" width="2" height="1" fill="#00f"/><rect x="23" y="55" width="1" height="1" fill="#000"/><rect x="8" y="56" width="1" height="1" fill="#000"/><rect x="9" y="56" width="7" height="1" fill="#fff"/><rect x="16" y="56" width="1" height="1" fill="#000"/><rect x="17" y="56" width="6" height="1" fill="#fff"/><rect x="23" y="56" width="1" height="1" fill="#000"/><rect x="8" y="57" width="1" height="1" fill="#000"/><rect x="9" y="57" width="7" height="1" fill="#fff"/><rect x="16" y="57" width="1" height="1" fill="#000"/><rect x="17" y="57" width="6" height="1" fill="#fff"/><rect x="23" y="57" width="1" height="1" fill="#000"/><rect x="8" y="58" width="16" height="1" fill="#000"/><rect x="16" y="59" width="8" height="1" fill="#000"/><rect x="16" y="60" width="2" height="1" fill="#000"/><rect x="18" y="60" width="3" height="1" fill="#c0c0c0"/><rect x="21" y="60" width="3" height="1" fill="#000"/><rect x="16" y="61" width="2" height="1" fill="#000"/><rect x="18" y="61" width="1" height="1" fill="#c0c0c0"/><rect x="19" y="61" width="1" height="1" fill="#000"/><rect x="20" y="61" width="1" height="1" fill="#c0c0c0"/><rect x="21" y="61" width="3" height="1" fill="#000"/><rect x="16" y="62" width="2" height="1" fill="#000"/><rect x="18" y="62" width="1" height="1" fill="#c0c0c0"/><rect x="19" y="62" width="1" height="1" fill="#000"/><rect x="20" y="62" width="1" height="1" fill="#c0c0c0"/><rect x="21" y="62" width="3" height="1" fill="#000"/><rect x="46" y="47" width="6" height="1" fill="#000"/><rect x="46" y="48" width="1" height="1" fill="#000"/><rect x="47" y="48" width="4" height="1" fill="#fff"/><rect x="51" y="48" width="2" height="1" fill="#000"/><rect x="46" y="49" width="1" height="1" fill="#000"/><rect x="47" y="49" width="1" height="1" fill="#fff"/><rect x="48" y="49" width="2" height="1" fill="#000"/><rect x="50" y="49" width="1" height="1" fill="#fff"/><rect x="51" y="49" width="1" height="1" fill="#000"/><rect x="52" y="49" width="1" height="1" fill="#fff"/><rect x="53" y="49" width="1" height="1" fill="#000"/><rect x="46" y="50" width="1" height="1" fill="#000"/><rect x="47" y="50" width="4" height="1" fill="#fff"/><rect x="51" y="50" width="4" height="1" fill="#000"/><rect x="46" y="51" width="1" height="1" fill="#000"/><rect x="47" y="51" width="1" height="1" fill="#fff"/><rect x="48" y="51" width="2" height="1" fill="#000"/><rect x="50" y="51" width="4" height="1" fill="#fff"/><rect x="54" y="51" width="1" height="1" fill="#000"/><rect x="46" y="52" width="1" height="1" fill="#000"/><rect x="47" y="52" width="7" height="1" fill="#fff"/><rect x="54" y="52" width="1" height="1" fill="#000"/><rect x="46" y="53" width="1" height="1" fill="#000"/><rect x="47" y="53" width="1" height="1" fill="#fff"/><rect x="48" y="53" width="4" height="1" fill="#000"/><rect x="52" y="53" width="1" height="1" fill="#fff"/><rect x="53" y="53" width="2" height="1" fill="#000"/><rect x="46" y="54" width="1" height="1" fill="#000"/><rect x="47" y="54" width="7" height="1" fill="#fff"/><rect x="54" y="54" width="1" height="1" fill="#000"/><rect x="43" y="55" width="16" height="1" fill="#000"/><rect x="43" y="56" width="1" height="1" fill="#000"/><rect x="44" y="56" width="1" height="1" fill="#fff"/><rect x="45" y="56" width="1" height="1" fill="#c0c0c0"/><rect x="46" y="56" width="1" height="1" fill="#fff"/><rect x="47" y="56" width="1" height="1" fill="#c0c0c0"/><rect x="48" y="56" width="1" height="1" fill="#fff"/><rect x="49" y="56" width="1" height="1" fill="#c0c0c0"/><rect x="50" y="56" width="1" height="1" fill="#fff"/><rect x="51" y="56" width="1" height="1" fill="#c0c0c0"/><rect x="52" y="56" width="1" height="1" fill="#fff"/><rect x="53" y="56" width="1" height="1" fill="#c0c0c0"/><rect x="54" y="56" width="1" height="1" fill="#fff"/><rect x="55" y="56" width="1" height="1" fill="#c0c0c0"/><rect x="56" y="56" width="2" height="1" fill="#fff"/><rect x="58" y="56" width="1" height="1" fill="#000"/><rect x="43" y="57" width="1" height="1" fill="#000"/><rect x="44" y="57" width="1" height="1" fill="#c0c0c0"/><rect x="45" y="57" width="1" height="1" fill="#fff"/><rect x="46" y="57" width="1" height="1" fill="#c0c0c0"/><rect x="47" y="57" width="1" height="1" fill="#fff"/><rect x="48" y="57" width="1" height="1" fill="#c0c0c0"/><rect x="49" y="57" width="1" height="1" fill="#fff"/><rect x="50" y="57" width="1" height="1" fill="#c0c0c0"/><rect x="51" y="57" width="1" height="1" fill="#fff"/><rect x="52" y="57" width="1" height="1" fill="#c0c0c0"/><rect x="53" y="57" width="1" height="1" fill="#fff"/><rect x="54" y="57" width="1" height="1" fill="#c0c0c0"/><rect x="55" y="57" width="1" height="1" fill="#fff"/><rect x="56" y="57" width="1" height="1" fill="#f00"/><rect x="57" y="57" width="1" height="1" fill="#fff"/><rect x="58" y="57" width="1" height="1" fill="#000"/><rect x="43" y="58" width="1" height="1" fill="#000"/><rect x="44" y="58" width="1" height="1" fill="#fff"/><rect x="45" y="58" width="1" height="1" fill="#c0c0c0"/><rect x="46" y="58" width="1" height="1" fill="#fff"/><rect x="47" y="58" width="1" height="1" fill="#c0c0c0"/><rect x="48" y="58" width="1" height="1" fill="#fff"/><rect x="49" y="58" width="1" height="1" fill="#c0c0c0"/><rect x="50" y="58" width="1" height="1" fill="#fff"/><rect x="51" y="58" width="1" height="1" fill="#c0c0c0"/><rect x="52" y="58" width="1" height="1" fill="#fff"/><rect x="53" y="58" width="1" height="1" fill="#c0c0c0"/><rect x="54" y="58" width="1" height="1" fill="#fff"/><rect x="55" y="58" width="1" height="1" fill="#c0c0c0"/><rect x="56" y="58" width="2" height="1" fill="#fff"/><rect x="58" y="58" width="1" height="1" fill="#000"/><rect x="43" y="59" width="16" height="1" fill="#000"/><rect x="43" y="60" width="1" height="1" fill="#000"/><rect x="44" y="60" width="14" height="1" fill="#c0c0c0"/><rect x="58" y="60" width="1" height="1" fill="#000"/><rect x="43" y="61" width="1" height="1" fill="#000"/><rect x="44" y="61" width="14" height="1" fill="#c0c0c0"/><rect x="58" y="61" width="1" height="1" fill="#000"/><rect x="44" y="62" width="14" height="1" fill="#000"/><rect x="75" y="49" width="13" height="1" fill="#000"/><rect x="75" y="50" width="1" height="1" fill="#000"/><rect x="76" y="50" width="11" height="1" fill="#fff"/><rect x="87" y="50" width="1" height="1" fill="#000"/><rect x="75" y="51" width="1" height="1" fill="#000"/><rect x="76" y="51" width="11" height="1" fill="#fff"/><rect x="87" y="51" width="1" height="1" fill="#000"/><rect x="75" y="52" width="1" height="1" fill="#000"/><rect x="76" y="52" width="6" height="1" fill="#f00"/><rect x="82" y="52" width="5" height="1" fill="#00f"/><rect x="87" y="52" width="1" height="1" fill="#000"/><rect x="75" y="53" width="1" height="1" fill="#000"/><rect x="76" y="53" width="6" height="1" fill="#fff"/><rect x="82" y="53" width="1" height="1" fill="#f00"/><rect x="83" y="53" width="1" height="1" fill="#00f"/><rect x="84" y="53" width="3" height="1" fill="#fff"/><rect x="87" y="53" width="1" height="1" fill="#000"/><rect x="75" y="54" width="1" height="1" fill="#000"/><rect x="76" y="54" width="5" height="1" fill="#fff"/><rect x="81" y="54" width="1" height="1" fill="#00f"/><rect x="82" y="54" width="1" height="1" fill="#fff"/><rect x="83" y="54" width="1" height="1" fill="#f00"/><rect x="84" y="54" width="3" height="1" fill="#fff"/><rect x="87" y="54" width="1" height="1" fill="#000"/><rect x="75" y="55" width="1" height="1" fill="#000"/><rect x="76" y="55" width="1" height="1" fill="#00f"/><rect x="77" y="55" width="3" height="1" fill="#fff"/><rect x="80" y="55" width="1" height="1" fill="#00f"/><rect x="81" y="55" width="2" height="1" fill="#fff"/><rect x="83" y="55" width="1" height="1" fill="#f00"/><rect x="84" y="55" width="3" height="1" fill="#fff"/><rect x="87" y="55" width="1" height="1" fill="#000"/><rect x="75" y="56" width="1" height="1" fill="#000"/><rect x="76" y="56" width="1" height="1" fill="#fff"/><rect x="77" y="56" width="2" height="1" fill="#00f"/><rect x="79" y="56" width="1" height="1" fill="#fff"/><rect x="80" y="56" width="1" height="1" fill="#00f"/><rect x="81" y="56" width="3" height="1" fill="#fff"/><rect x="84" y="56" width="1" height="1" fill="#f00"/><rect x="85" y="56" width="2" height="1" fill="#fff"/><rect x="87" y="56" width="1" height="1" fill="#000"/><rect x="75" y="57" width="1" height="1" fill="#000"/><rect x="76" y="57" width="3" height="1" fill="#fff"/><rect x="79" y="57" width="1" height="1" fill="#00f"/><rect x="80" y="57" width="4" height="1" fill="#fff"/><rect x="84" y="57" width="1" height="1" fill="#f00"/><rect x="85" y="57" width="2" height="1" fill="#fff"/><rect x="87" y="57" width="1" height="1" fill="#000"/><rect x="75" y="58" width="1" height="1" fill="#000"/><rect x="76" y="58" width="9" height="1" fill="#fff"/><rect x="85" y="58" width="1" height="1" fill="#f00"/><rect x="86" y="58" width="1" height="1" fill="#fff"/><rect x="87" y="58" width="1" height="1" fill="#000"/><rect x="75" y="59" width="1" height="1" fill="#000"/><rect x="76" y="59" width="9" height="1" fill="#fff"/><rect x="85" y="59" width="1" height="1" fill="#f00"/><rect x="86" y="59" width="1" height="1" fill="#fff"/><rect x="87" y="59" width="1" height="1" fill="#000"/><rect x="75" y="60" width="1" height="1" fill="#000"/><rect x="76" y="60" width="10" height="1" fill="#fff"/><rect x="86" y="60" width="1" height="1" fill="#f00"/><rect x="87" y="60" width="1" height="1" fill="#000"/><rect x="75" y="61" width="13" height="1" fill="#000"/><rect x="103" y="48" width="5" height="1" fill="#000"/><rect x="101" y="49" width="2" height="1" fill="#000"/><rect x="103" y="49" width="2" height="1" fill="#fff"/><rect x="105" y="49" width="1" height="1" fill="#000"/><rect x="106" y="49" width="2" height="1" fill="#fff"/><rect x="108" y="49" width="2" height="1" fill="#000"/><rect x="100" y="50" width="1" height="1" fill="#000"/><rect x="101" y="50" width="4" height="1" fill="#fff"/><rect x="105" y="50" width="1" height="1" fill="#000"/><rect x="106" y="50" width="4" height="1" fill="#fff"/><rect x="110" y="50" width="1" height="1" fill="#000"/><rect x="100" y="51" width="1" height="1" fill="#000"/><rect x="101" y="51" width="5" height="1" fill="#fff"/><rect x="106" y="51" width="1" height="1" fill="#000"/><rect x="107" y="51" width="3" height="1" fill="#fff"/><rect x="110" y="51" width="1" height="1" fill="#000"/><rect x="99" y="52" width="1" height="1" fill="#000"/><rect x="100" y="52" width="6" height="1" fill="#fff"/><rect x="106" y="52" width="1" height="1" fill="#000"/><rect x="107" y="52" width="4" height="1" fill="#fff"/><rect x="111" y="52" width="1" height="1" fill="#000"/><rect x="99" y="53" width="1" height="1" fill="#000"/><rect x="100" y="53" width="7" height="1" fill="#fff"/><rect x="107" y="53" width="2" height="1" fill="#000"/><rect x="109" y="53" width="2" height="1" fill="#fff"/><rect x="111" y="53" width="1" height="1" fill="#000"/><rect x="99" y="54" width="13" height="1" fill="#000"/><rect x="99" y="55" width="1" height="1" fill="#000"/><rect x="100" y="55" width="7" height="1" fill="#fff"/><rect x="107" y="55" width="2" height="1" fill="#000"/><rect x="109" y="55" width="2" height="1" fill="#fff"/><rect x="111" y="55" width="1" height="1" fill="#000"/><rect x="99" y="56" width="1" height="1" fill="#000"/><rect x="100" y="56" width="6" height="1" fill="#fff"/><rect x="106" y="56" width="1" height="1" fill="#000"/><rect x="107" y="56" width="4" height="1" fill="#fff"/><rect x="111" y="56" width="1" height="1" fill="#000"/><rect x="100" y="57" width="1" height="1" fill="#000"/><rect x="101" y="57" width="5" height="1" fill="#fff"/><rect x="106" y="57" width="1" height="1" fill="#000"/><rect x="107" y="57" width="3" height="1" fill="#fff"/><rect x="110" y="57" width="1" height="1" fill="#000"/><rect x="100" y="58" width="1" height="1" fill="#000"/><rect x="101" y="58" width="4" height="1" fill="#fff"/><rect x="105" y="58" width="1" height="1" fill="#000"/><rect x="106" y="58" width="4" height="1" fill="#fff"/><rect x="110" y="58" width="1" height="1" fill="#000"/><rect x="101" y="59" width="2" height="1" fill="#000"/><rect x="103" y="59" width="2" height="1" fill="#fff"/><rect x="105" y="59" width="1" height="1" fill="#000"/><rect x="106" y="59" width="2" height="1" fill="#fff"/><rect x="108" y="59" width="2" height="1" fill="#000"/><rect x="103" y="60" width="5" height="1" fill="#000"/><rect x="128" y="48" width="5" height="1" fill="#000"/><rect x="126" y="49" width="2" height="1" fill="#000"/><rect x="128" y="49" width="2" height="1" fill="#fff"/><rect x="130" y="49" width="1" height="1" fill="#000"/><rect x="131" y="49" width="2" height="1" fill="#fff"/><rect x="133" y="49" width="2" height="1" fill="#000"/><rect x="125" y="50" width="1" height="1" fill="#000"/><rect x="126" y="50" width="9" height="1" fill="#fff"/><rect x="135" y="50" width="1" height="1" fill="#000"/><rect x="125" y="51" width="1" height="1" fill="#000"/><rect x="126" y="51" width="2" height="1" fill="#fff"/><rect x="128" y="51" width="1" height="1" fill="#000"/><rect x="129" y="51" width="3" height="1" fill="#fff"/><rect x="132" y="51" width="1" height="1" fill="#000"/><rect x="133" y="51" width="2" height="1" fill="#fff"/><rect x="135" y="51" width="1" height="1" fill="#000"/><rect x="124" y="52" width="1" height="1" fill="#000"/><rect x="125" y="52" width="5" height="1" fill="#fff"/><rect x="130" y="52" width="1" height="1" fill="#000"/><rect x="131" y="52" width="5" height="1" fill="#fff"/><rect x="136" y="52" width="1" height="1" fill="#000"/><rect x="124" y="53" width="1" height="1" fill="#000"/><rect x="125" y="53" width="11" height="1" fill="#fff"/><rect x="136" y="53" width="1" height="1" fill="#000"/><rect x="124" y="54" width="2" height="1" fill="#000"/><rect x="126" y="54" width="1" height="1" fill="#fff"/><rect x="127" y="54" width="1" height="1" fill="#000"/><rect x="128" y="54" width="2" height="1" fill="#fff"/><rect x="130" y="54" width="1" height="1" fill="#000"/><rect x="131" y="54" width="2" height="1" fill="#fff"/><rect x="133" y="54" width="1" height="1" fill="#000"/><rect x="134" y="54" width="1" height="1" fill="#fff"/><rect x="135" y="54" width="2" height="1" fill="#000"/><rect x="124" y="55" width="1" height="1" fill="#000"/><rect x="125" y="55" width="11" height="1" fill="#fff"/><rect x="136" y="55" width="1" height="1" fill="#000"/><rect x="124" y="56" width="1" height="1" fill="#000"/><rect x="125" y="56" width="5" height="1" fill="#fff"/><rect x="130" y="56" width="1" height="1" fill="#000"/><rect x="131" y="56" width="5" height="1" fill="#fff"/><rect x="136" y="56" width="1" height="1" fill="#000"/><rect x="125" y="57" width="1" height="1" fill="#000"/><rect x="126" y="57" width="2" height="1" fill="#fff"/><rect x="128" y="57" width="1" height="1" fill="#000"/><rect x="129" y="57" width="3" height="1" fill="#fff"/><rect x="132" y="57" width="1" height="1" fill="#000"/><rect x="133" y="57" width="2" height="1" fill="#fff"/><rect x="135" y="57" width="1" height="1" fill="#000"/><rect x="125" y="58" width="1" height="1" fill="#000"/><rect x="126" y="58" width="9" height="1" fill="#fff"/><rect x="135" y="58" width="1" height="1" fill="#000"/><rect x="126" y="59" width="2" height="1" fill="#000"/><rect x="128" y="59" width="2" height="1" fill="#fff"/><rect x="130" y="59" width="1" height="1" fill="#000"/><rect x="131" y="59" width="2" height="1" fill="#fff"/><rect x="133" y="59" width="2" height="1" fill="#000"/><rect x="128" y="60" width="5" height="1" fill="#000"/><rect x="148" y="49" width="16" height="1" fill="#000"/><rect x="148" y="50" width="1" height="1" fill="#000"/><rect x="149" y="50" width="1" height="1" fill="#fff"/><rect x="150" y="50" width="12" height="1" fill="#00f"/><rect x="162" y="50" width="1" height="1" fill="#fff"/><rect x="163" y="50" width="1" height="1" fill="#000"/><rect x="148" y="51" width="1" height="1" fill="#000"/><rect x="149" y="51" width="14" height="1" fill="#00f"/><rect x="163" y="51" width="1" height="1" fill="#000"/><rect x="148" y="52" width="1" height="1" fill="#000"/><rect x="149" y="52" width="14" height="1" fill="#fff"/><rect x="163" y="52" width="1" height="1" fill="#000"/><rect x="148" y="53" width="1" height="1" fill="#000"/><rect x="149" y="53" width="1" height="1" fill="#fff"/><rect x="150" y="53" width="2" height="1" fill="#000"/><rect x="152" y="53" width="1" height="1" fill="#fff"/><rect x="153" y="53" width="3" height="1" fill="#000"/><rect x="156" y="53" width="1" height="1" fill="#fff"/><rect x="157" y="53" width="3" height="1" fill="#000"/><rect x="160" y="53" width="1" height="1" fill="#fff"/><rect x="161" y="53" width="3" height="1" fill="#000"/><rect x="148" y="54" width="1" height="1" fill="#000"/><rect x="149" y="54" width="14" height="1" fill="#fff"/><rect x="163" y="54" width="1" height="1" fill="#000"/><rect x="148" y="55" width="1" height="1" fill="#000"/><rect x="149" y="55" width="1" height="1" fill="#fff"/><rect x="150" y="55" width="2" height="1" fill="#000"/><rect x="152" y="55" width="1" height="1" fill="#fff"/><rect x="153" y="55" width="3" height="1" fill="#000"/><rect x="156" y="55" width="1" height="1" fill="#fff"/><rect x="157" y="55" width="3" height="1" fill="#000"/><rect x="160" y="55" width="1" height="1" fill="#fff"/><rect x="161" y="55" width="3" height="1" fill="#000"/><rect x="148" y="56" width="1" height="1" fill="#000"/><rect x="149" y="56" width="14" height="1" fill="#fff"/><rect x="163" y="56" width="1" height="1" fill="#000"/><rect x="148" y="57" width="1" height="1" fill="#000"/><rect x="149" y="57" width="1" height="1" fill="#fff"/><rect x="150" y="57" width="2" height="1" fill="#000"/><rect x="152" y="57" width="1" height="1" fill="#fff"/><rect x="153" y="57" width="3" height="1" fill="#000"/><rect x="156" y="57" width="1" height="1" fill="#fff"/><rect x="157" y="57" width="3" height="1" fill="#000"/><rect x="160" y="57" width="1" height="1" fill="#fff"/><rect x="161" y="57" width="3" height="1" fill="#000"/><rect x="148" y="58" width="1" height="1" fill="#000"/><rect x="149" y="58" width="14" height="1" fill="#fff"/><rect x="163" y="58" width="1" height="1" fill="#000"/><rect x="148" y="59" width="1" height="1" fill="#000"/><rect x="149" y="59" width="1" height="1" fill="#fff"/><rect x="150" y="59" width="2" height="1" fill="#000"/><rect x="152" y="59" width="1" height="1" fill="#fff"/><rect x="153" y="59" width="3" height="1" fill="#000"/><rect x="156" y="59" width="1" height="1" fill="#fff"/><rect x="157" y="59" width="3" height="1" fill="#000"/><rect x="160" y="59" width="1" height="1" fill="#fff"/><rect x="161" y="59" width="3" height="1" fill="#000"/><rect x="148" y="60" width="1" height="1" fill="#000"/><rect x="149" y="60" width="14" height="1" fill="#fff"/><rect x="163" y="60" width="1" height="1" fill="#000"/><rect x="148" y="61" width="16" height="1" fill="#000"/><rect x="182" y="58" width="1" height="1" fill="#000"/><rect x="184" y="58" width="1" height="1" fill="#000"/><rect x="186" y="58" width="1" height="1" fill="#000"/><rect x="188" y="58" width="1" height="1" fill="#000"/><rect x="190" y="58" width="1" height="1" fill="#000"/><rect x="192" y="58" width="1" height="1" fill="#000"/><rect x="194" y="58" width="1" height="1" fill="#000"/><rect x="182" y="59" width="1" height="1" fill="#000"/><rect x="184" y="59" width="1" height="1" fill="#000"/><rect x="186" y="59" width="1" height="1" fill="#000"/><rect x="188" y="59" width="1" height="1" fill="#000"/><rect x="190" y="59" width="1" height="1" fill="#000"/><rect x="192" y="59" width="1" height="1" fill="#000"/><rect x="194" y="59" width="1" height="1" fill="#000"/><rect x="182" y="60" width="14" height="1" fill="#000"/><rect x="208" y="58" width="1" height="1" fill="#000"/><rect x="215" y="58" width="1" height="1" fill="#000"/><rect x="219" y="58" width="1" height="1" fill="#000"/><rect x="221" y="58" width="1" height="1" fill="#000"/><rect x="208" y="59" width="1" height="1" fill="#000"/><rect x="212" y="59" width="1" height="1" fill="#000"/><rect x="215" y="59" width="1" height="1" fill="#000"/><rect x="217" y="59" width="1" height="1" fill="#000"/><rect x="219" y="59" width="1" height="1" fill="#000"/><rect x="221" y="59" width="1" height="1" fill="#000"/><rect x="208" y="60" width="14" height="1" fill="#000"/><rect x="327" y="48" width="3" height="2" fill="#000"/><rect x="327" y="51" width="3" height="2" fill="#000"/><rect x="327" y="54" width="3" height="2" fill="#000"/><rect x="327" y="57" width="3" height="2" fill="#000"/><rect x="327" y="60" width="3" height="2" fill="#000"/><rect x="339" y="47" width="1" height="1" fill="#000"/><rect x="342" y="47" width="4" height="1" fill="#000"/><rect x="348" y="47" width="1" height="1" fill="#000"/><rect x="339" y="48" width="4" height="1" fill="#000"/><rect x="343" y="48" width="2" height="1" fill="#c0c0c0"/><rect x="345" y="48" width="6" height="1" fill="#000"/><rect x="339" y="49" width="3" height="1" fill="#000"/><rect x="342" y="49" width="1" height="1" fill="#c0c0c0"/><rect x="343" y="49" width="2" height="1" fill="#000"/><rect x="345" y="49" width="1" height="1" fill="#c0c0c0"/><rect x="346" y="49" width="1" height="1" fill="#000"/><rect x="347" y="49" width="3" height="1" fill="#c0c0c0"/><rect x="350" y="49" width="1" height="1" fill="#000"/><rect x="339" y="50" width="3" height="1" fill="#000"/><rect x="342" y="50" width="1" height="1" fill="#c0c0c0"/><rect x="343" y="50" width="2" height="1" fill="#000"/><rect x="345" y="50" width="1" height="1" fill="#c0c0c0"/><rect x="346" y="50" width="5" height="1" fill="#000"/><rect x="353" y="50" width="1" height="1" fill="#000"/><rect x="339" y="51" width="4" height="1" fill="#000"/><rect x="343" y="51" width="2" height="1" fill="#c0c0c0"/><rect x="345" y="51" width="3" height="1" fill="#000"/><rect x="350" y="51" width="5" height="1" fill="#000"/><rect x="340" y="52" width="7" height="1" fill="#000"/><rect x="348" y="52" width="2" height="1" fill="#000"/><rect x="350" y="52" width="1" height="1" fill="#c0c0c0"/><rect x="351" y="52" width="4" height="1" fill="#000"/><rect x="339" y="53" width="1" height="1" fill="#000"/><rect x="341" y="53" width="4" height="1" fill="#000"/><rect x="346" y="53" width="1" height="1" fill="#c0c0c0"/><rect x="347" y="53" width="6" height="1" fill="#000"/><rect x="353" y="53" width="1" height="1" fill="#c0c0c0"/><rect x="354" y="53" width="1" height="1" fill="#000"/><rect x="342" y="54" width="3" height="1" fill="#000"/><rect x="347" y="54" width="5" height="1" fill="#000"/><rect x="352" y="54" width="1" height="1" fill="#c0c0c0"/><rect x="353" y="54" width="2" height="1" fill="#000"/><rect x="347" y="55" width="1" height="1" fill="#000"/><rect x="348" y="55" width="2" height="1" fill="#c0c0c0"/><rect x="350" y="55" width="2" height="1" fill="#000"/><rect x="352" y="55" width="1" height="1" fill="#c0c0c0"/><rect x="353" y="55" width="1" height="1" fill="#000"/><rect x="339" y="56" width="2" height="1" fill="#000"/><rect x="342" y="56" width="2" height="1" fill="#000"/><rect x="347" y="56" width="5" height="1" fill="#000"/><rect x="352" y="56" width="1" height="1" fill="#c0c0c0"/><rect x="353" y="56" width="2" height="1" fill="#000"/><rect x="340" y="57" width="4" height="1" fill="#000"/><rect x="344" y="57" width="1" height="1" fill="#c0c0c0"/><rect x="345" y="57" width="1" height="1" fill="#000"/><rect x="349" y="57" width="4" height="1" fill="#000"/><rect x="353" y="57" width="1" height="1" fill="#c0c0c0"/><rect x="354" y="57" width="1" height="1" fill="#000"/><rect x="339" y="58" width="6" height="1" fill="#000"/><rect x="348" y="58" width="2" height="1" fill="#000"/><rect x="350" y="58" width="1" height="1" fill="#c0c0c0"/><rect x="351" y="58" width="4" height="1" fill="#000"/><rect x="340" y="59" width="6" height="1" fill="#000"/><rect x="350" y="59" width="5" height="1" fill="#000"/><rect x="339" y="60" width="2" height="1" fill="#000"/><rect x="341" y="60" width="1" height="1" fill="#c0c0c0"/><rect x="342" y="60" width="5" height="1" fill="#000"/><rect x="353" y="60" width="2" height="1" fill="#000"/><rect x="340" y="61" width="3" height="1" fill="#000"/><rect x="344" y="61" width="3" height="1" fill="#000"/><rect x="354" y="61" width="1" height="1" fill="#000"/><rect x="341" y="62" width="1" height="1" fill="#000"/><rect x="345" y="62" width="1" height="1" fill="#000"/><rect x="377" y="49" width="3" height="1" fill="#000"/><rect x="376" y="50" width="1" height="1" fill="#000"/><rect x="380" y="50" width="2" height="1" fill="#000"/><rect x="375" y="51" width="1" height="1" fill="#000"/><rect x="379" y="51" width="2" height="1" fill="#000"/><rect x="382" y="51" width="1" height="1" fill="#000"/><rect x="375" y="52" width="1" height="1" fill="#000"/><rect x="378" y="52" width="1" height="1" fill="#000"/><rect x="380" y="52" width="2" height="1" fill="#000"/><rect x="383" y="52" width="1" height="1" fill="#000"/><rect x="375" y="53" width="1" height="1" fill="#000"/><rect x="377" y="53" width="2" height="1" fill="#000"/><rect x="380" y="53" width="1" height="1" fill="#000"/><rect x="384" y="53" width="1" height="1" fill="#000"/><rect x="376" y="54" width="2" height="1" fill="#000"/><rect x="379" y="54" width="2" height="1" fill="#000"/><rect x="385" y="54" width="1" height="1" fill="#000"/><rect x="376" y="55" width="4" height="1" fill="#000"/><rect x="385" y="55" width="1" height="1" fill="#000"/><rect x="376" y="56" width="1" height="1" fill="#000"/><rect x="385" y="56" width="1" height="1" fill="#000"/><rect x="376" y="57" width="2" height="1" fill="#000"/><rect x="384" y="57" width="2" height="1" fill="#000"/><rect x="377" y="58" width="2" height="1" fill="#000"/><rect x="383" y="58" width="2" height="1" fill="#000"/><rect x="378" y="59" width="2" height="1" fill="#000"/><rect x="382" y="59" width="2" height="1" fill="#000"/><rect x="379" y="60" width="4" height="1" fill="#000"/><g fill="none" stroke="#000" stroke-width="1"><path d="M246.5 48v13M241.5 55.5l5 5l5-5"/><path d="M296.5 48v13M291.5 53.5l5-5l5 5"/><path d="M266.5 53.5l3 3l-3 3M278.5 53.5l-3 3l3 3"/></g><rect x="272" y="56" width="1" height="1" fill="#000"/><rect x="6" y="5" width="16" height="16" fill="#c0c0c0"/><g fill="none" stroke-width="1" shape-rendering="auto"><circle cx="13.5" cy="12.5" r="7" stroke="#808080"/><path d="M8 17a7 7 0 0 0 11 0" stroke="#fff" transform="translate(0.7 0.7)"/><path d="M7 13.5h14" stroke="#fff"/><path d="M7 12.5h12" stroke="#808080"/><path d="M14 6q2 5 6 6.5" stroke="#fff"/><path d="M20 14q-5 1-7 6.5" stroke="#fff"/><path d="M20.5 12q-5 2-8 8" stroke="#808080"/></g><rect x="953" y="15" width="6" height="2" fill="#000"/><rect x="968" y="8" width="9" height="9" fill="#000"/><rect x="969" y="10" width="7" height="6" fill="#d4d0c8"/><path d="M987 9h2l2 2l2-2h2l-3 3l3 3v1h-2l-2-2l-2 2h-2v-1l3-3z" fill="#000" shape-rendering="crispEdges"/><g font-family="Liberation Sans, sans-serif" shape-rendering="auto"><text x="182.5" y="54.5" font-size="9" textLength="10.5" lengthAdjust="spacingAndGlyphs" stroke="#000" stroke-width="0.35">Lin</text><text x="208" y="54.5" font-size="9" textLength="13" lengthAdjust="spacingAndGlyphs" stroke="#000" stroke-width="0.35">Log</text><text x="313.7" y="60" font-size="13" font-weight="bold" fill="#f00" textLength="6.3" lengthAdjust="spacingAndGlyphs">?</text><text x="319.7" y="59" font-size="15" font-family="DejaVu Sans, Liberation Sans, sans-serif" fill="#00f" textLength="5.5" lengthAdjust="spacingAndGlyphs">{</text></g></svg>
</body></html>
